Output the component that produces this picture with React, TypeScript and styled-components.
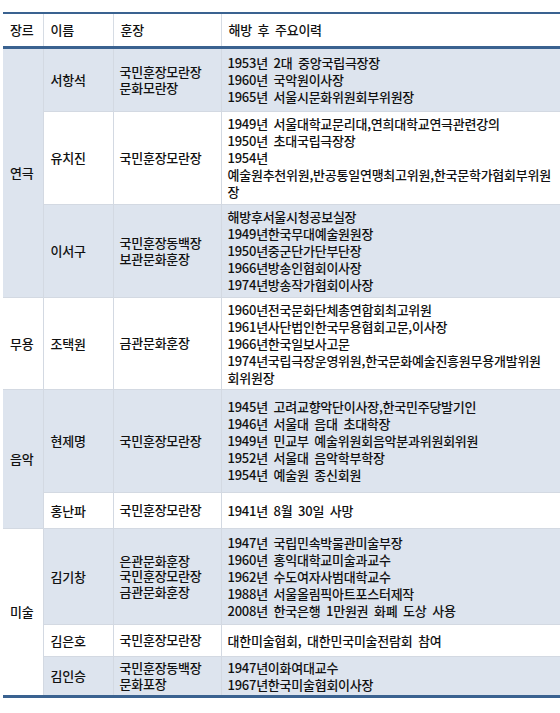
import styled, { createGlobalStyle } from "styled-components";

const GlobalStyle = createGlobalStyle`
  body {
    margin: 0;
    background: #ffffff;
    font-family: "Noto Sans CJK KR", "Noto Sans", sans-serif;
  }
`;

const Table = styled.table`
  margin: 12px 0 0 3px;
  width: 557px;
  border-collapse: collapse;
  table-layout: fixed;
  font-size: 13px;
  font-weight: 500;
  letter-spacing: -0.25px;
  word-spacing: 3px;
  line-height: 17px;
  color: #111111;
  border-top: 2px solid #3a6290;
  border-bottom: 3px solid #3a6290;
`;

const HeadRow = styled.tr`
  height: 34px;
`;

const Th = styled.th`
  text-align: left;
  font-weight: 500;
  padding: 0 0 0 7px;
  background: #ffffff;
  border-left: 1px solid #d6dce4;
  border-bottom: 3px solid #3a6290;

  &:first-child {
    border-left: none;
  }
`;

const Row = styled.tr<{ $h: number }>`
  height: ${(p) => p.$h}px;
`;

const Cell = styled.td<{ $shaded: boolean }>`
  vertical-align: middle;
  padding: 0 4px 0 7px;
  background: ${(p) => (p.$shaded ? "#dde4ee" : "#ffffff")};
  border-left: 1px solid #d3d9e2;
  border-top: 1px solid #d3d9e2;
`;

const GenreCell = styled(Cell)`
  border-left: none;
`;

const MedalCell = styled(Cell)`
  padding-left: 6px;
  line-height: 15.5px;
`;

const HistoryCell = styled(Cell)`
  padding-left: 6px;
`;

const Line = styled.div`
  white-space: nowrap;
`;

type Person = {
  name: string;
  medals: string[];
  history: string[];
  height: number;
};

type Group = {
  genre: string;
  people: Person[];
};

const groups: Group[] = [
  {
    genre: "연극",
    people: [
      {
        name: "서항석",
        medals: ["국민훈장모란장", "문화모란장"],
        history: ["1953년 2대 중앙국립극장장", "1960년 국악원이사장", "1965년 서울시문화위원회부위원장"],
        height: 64,
      },
      {
        name: "유치진",
        medals: ["국민훈장모란장"],
        history: [
          "1949년 서울대학교문리대,연희대학교연극관련강의",
          "1950년 초대국립극장장",
          "1954년",
          "예술원추천위원,반공통일연맹최고위원,한국문학가협회부위원",
          "장",
        ],
        height: 93,
      },
      {
        name: "이서구",
        medals: ["국민훈장동백장", "보관문화훈장"],
        history: [
          "해방후서울시청공보실장",
          "1949년한국무대예술원원장",
          "1950년중군단가단부단장",
          "1966년방송인협회이사장",
          "1974년방송작가협회이사장",
        ],
        height: 93,
      },
    ],
  },
  {
    genre: "무용",
    people: [
      {
        name: "조택원",
        medals: ["금관문화훈장"],
        history: [
          "1960년전국문화단체총연합회최고위원",
          "1961년사단법인한국무용협회고문,이사장",
          "1966년한국일보사고문",
          "1974년국립극장운영위원,한국문화예술진흥원무용개발위원",
          "회위원장",
        ],
        height: 92,
      },
    ],
  },
  {
    genre: "음악",
    people: [
      {
        name: "현제명",
        medals: ["국민훈장모란장"],
        history: [
          "1945년 고려교향악단이사장,한국민주당발기인",
          "1946년 서울대 음대 초대학장",
          "1949년 민교부 예술위원회음악분과위원회위원",
          "1952년 서울대 음악학부학장",
          "1954년 예술원 종신회원",
        ],
        height: 103,
      },
      {
        name: "홍난파",
        medals: ["국민훈장모란장"],
        history: ["1941년 8월 30일 사망"],
        height: 36,
      },
    ],
  },
  {
    genre: "미술",
    people: [
      {
        name: "김기창",
        medals: ["은관문화훈장", "국민훈장모란장", "금관문화훈장"],
        history: [
          "1947년 국립민속박물관미술부장",
          "1960년 홍익대학교미술과교수",
          "1962년 수도여자사범대학교수",
          "1988년 서울올림픽아트포스터제작",
          "2008년 한국은행 1만원권 화폐 도상 사용",
        ],
        height: 96,
      },
      {
        name: "김은호",
        medals: ["국민훈장모란장"],
        history: ["대한미술협회, 대한민국미술전람회 참여"],
        height: 32,
      },
      {
        name: "김인승",
        medals: ["국민훈장동백장", "문화포장"],
        history: ["1947년이화여대교수", "1967년한국미술협회이사장"],
        height: 40,
      },
    ],
  },
];

export default function App() {
  let index = 0;

  return (
    <>
      <GlobalStyle />
      <Table>
        <colgroup>
          <col style={{ width: 40 }} />
          <col style={{ width: 70 }} />
          <col style={{ width: 108 }} />
          <col />
        </colgroup>
        <thead>
          <HeadRow>
            <Th>장르</Th>
            <Th>이름</Th>
            <Th>훈장</Th>
            <Th>해방 후 주요이력</Th>
          </HeadRow>
        </thead>
        <tbody>
          {groups.map((group, g) =>
            group.people.map((person, i) => {
              const shaded = index % 2 === 0;
              index += 1;
              return (
                <Row key={person.name} $h={person.height}>
                  {i === 0 && (
                    <GenreCell $shaded={g % 2 === 0} rowSpan={group.people.length}>
                      {group.genre}
                    </GenreCell>
                  )}
                  <Cell $shaded={shaded}>{person.name}</Cell>
                  <MedalCell $shaded={shaded}>
                    {person.medals.map((m) => (
                      <Line key={m}>{m}</Line>
                    ))}
                  </MedalCell>
                  <HistoryCell $shaded={shaded}>
                    {person.history.map((h) => (
                      <Line key={h}>{h}</Line>
                    ))}
                  </HistoryCell>
                </Row>
              );
            })
          )}
        </tbody>
      </Table>
    </>
  );
}
